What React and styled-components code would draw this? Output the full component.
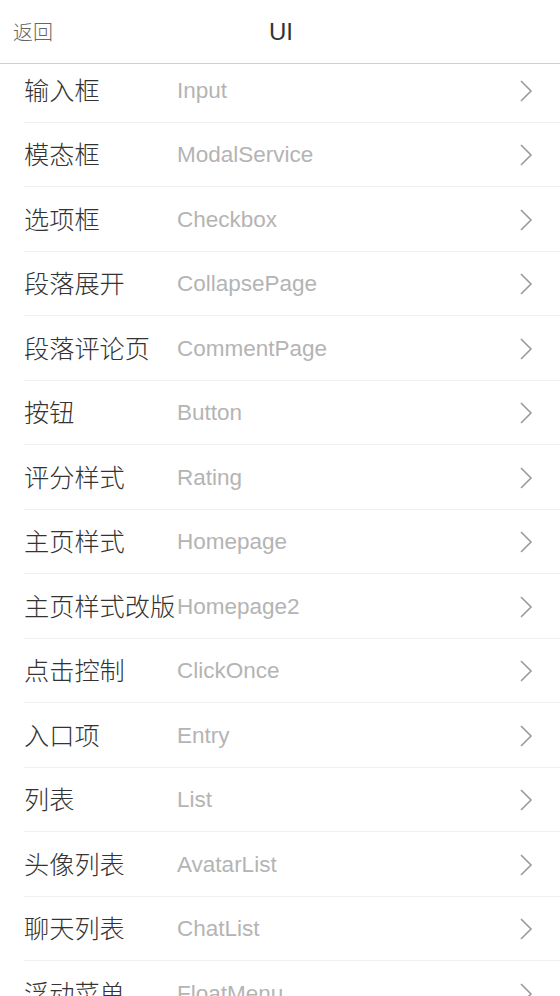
import React from "react";
import styled, { createGlobalStyle } from "styled-components";

const Global = createGlobalStyle`
  html, body { margin: 0; padding: 0; background: #fff; }
  body { font-family: "Liberation Sans", "Noto Sans CJK SC", sans-serif; overflow: hidden; }
`;

const Page = styled.div`
  width: 560px;
  background: #fff;
`;

const Header = styled.header`
  position: relative;
  z-index: 1;
  background: #fff;
  height: 63px;
  border-bottom: 1px solid #cfcfcf;
  display: grid;
  grid-template-columns: 1fr auto 1fr;
  align-items: center;
`;

const Back = styled.span`
  justify-self: start;
  padding-left: 13px;
  font-size: 20px;
  color: #666;
  font-family: "Noto Sans CJK SC", sans-serif;
  font-weight: 300;
`;

const Title = styled.h1`
  margin: 0 0 0 2px;
  font-size: 24px;
  font-weight: 400;
  color: #333;
  font-family: "Liberation Sans", sans-serif;
`;

const List = styled.ul`
  list-style: none;
  margin: -6px 0 0;
  padding: 0;
`;

const Row = styled.li`
  margin-left: 24px;
  height: 63.5px;
  border-bottom: 1px solid #efefef;
  display: flex;
  align-items: center;
  padding-right: 27px;
  box-sizing: content-box;
`;

const Label = styled.span`
  flex: none;
  width: 153px;
  font-size: 25.2px;
  color: #333;
  font-family: "Noto Sans CJK SC", sans-serif;
  font-weight: 300;
  white-space: nowrap;
  margin-top: -2px;
`;

const Name = styled.span`
  flex: 1;
  font-size: 22.5px;
  color: #b4b4b4;
  font-family: "Liberation Sans", sans-serif;
  margin-top: 2px;
`;

const Arrow = styled.svg`
  flex: none;
  margin-top: 2px;
`;

const Chevron = () => (
  <Arrow width="14" height="22" viewBox="0 0 14 22">
    <polyline points="2,1 12,11 2,21" fill="none" stroke="#9a9a9a" strokeWidth="1.6" />
  </Arrow>
);

const items = [
  ["输入框", "Input"],
  ["模态框", "ModalService"],
  ["选项框", "Checkbox"],
  ["段落展开", "CollapsePage"],
  ["段落评论页", "CommentPage"],
  ["按钮", "Button"],
  ["评分样式", "Rating"],
  ["主页样式", "Homepage"],
  ["主页样式改版", "Homepage2"],
  ["点击控制", "ClickOnce"],
  ["入口项", "Entry"],
  ["列表", "List"],
  ["头像列表", "AvatarList"],
  ["聊天列表", "ChatList"],
  ["浮动菜单", "FloatMenu"],
  ["标签", "Tag"],
];

export default function App() {
  return (
    <Page>
      <Global />
      <Header>
        <Back>返回</Back>
        <Title>UI</Title>
        <span />
      </Header>
      <List>
        {items.map(([zh, en]) => (
          <Row key={en}>
            <Label>{zh}</Label>
            <Name>{en}</Name>
            <Chevron />
          </Row>
        ))}
      </List>
    </Page>
  );
}
